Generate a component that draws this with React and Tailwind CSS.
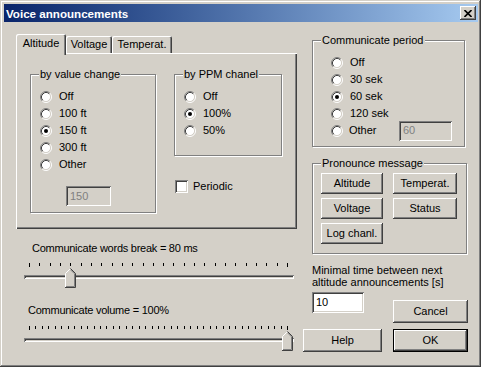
import React from "react";

// classic win2k bevels
const raised =
  "shadow-[inset_-1px_-1px_#404040,inset_1px_1px_#ffffff,inset_-2px_-2px_#808080,inset_2px_2px_#d4d0c8]";
const sunken =
  "shadow-[inset_1px_1px_#808080,inset_-1px_-1px_#ffffff,inset_2px_2px_#404040,inset_-2px_-2px_#d4d0c8]";
const etched = "border border-[#808080] shadow-[inset_1px_1px_#ffffff,1px_1px_#ffffff]";

function Radio({ checked }) {
  return (
    <svg width="12" height="12" viewBox="0 0 12 12" className="shrink-0">
      <circle cx="6" cy="6" r="4.5" fill="#ffffff" />
      <path d="M2.11 9.89 A5.5 5.5 0 0 1 9.89 2.11" stroke="#808080" fill="none" />
      <path d="M9.89 2.11 A5.5 5.5 0 0 1 2.11 9.89" stroke="#ffffff" fill="none" />
      <path d="M2.82 9.18 A4.5 4.5 0 0 1 9.18 2.82" stroke="#404040" fill="none" />
      <path d="M9.18 2.82 A4.5 4.5 0 0 1 2.82 9.18" stroke="#d4d0c8" fill="none" />
      {checked && <circle cx="6" cy="6" r="2" fill="#000000" />}
    </svg>
  );
}

function RadioRow({ label, checked, children }) {
  return (
    <div className="flex items-center h-[17px]">
      <Radio checked={checked} />
      <span className="ml-[7px]">{label}</span>
      {children}
    </div>
  );
}

function Group({ title, className, children }) {
  return (
    <fieldset className={etched + " m-0 p-0 min-w-0 " + className}>
      <legend className="ml-[8px] px-[1px] leading-[13px] bg-[#d4d0c8]">{title}</legend>
      {children}
    </fieldset>
  );
}

function Button({ children, className, def }) {
  if (def) {
    return (
      <div className={"border border-black " + className}>
        <div className={"w-full h-full flex items-center justify-center " + raised}>{children}</div>
      </div>
    );
  }
  return (
    <div className={"flex items-center justify-center " + raised + " " + className}>{children}</div>
  );
}

function Ticks({ count, width }) {
  const step = (width - 1) / count;
  const lines = [];
  for (let i = 0; i <= count; i++) {
    const x = Math.round(i * step) + 0.5;
    const end = i === 0 || i === count;
    lines.push(<line key={i} x1={x} x2={x} y1={0} y2={end ? 4 : 3} stroke="#000000" />);
  }
  return (
    <svg width={width} height="4" className="absolute left-[5px] top-[2px]">
      {lines}
    </svg>
  );
}

function Thumb({ left }) {
  return (
    <svg width="11" height="20" viewBox="0 0 11 20" className="absolute top-[7px]" style={{ left }}>
      <polygon points="0.5,19.5 0.5,5.5 5.5,0.5 10.5,5.5 10.5,19.5" fill="#d4d0c8" />
      <polyline points="0.5,19 0.5,5.5 5,1" stroke="#ffffff" fill="none" />
      <polyline points="5.5,0.5 10.5,5.5 10.5,19.5 0,19.5" stroke="#404040" fill="none" />
      <polyline points="5.5,1.8 9.5,5.8 9.5,18.5 1,18.5" stroke="#808080" fill="none" />
    </svg>
  );
}

function Slider({ ticks, thumb }) {
  return (
    <div className="relative h-[28px] w-[270px] ml-[8px]">
      <Ticks count={ticks} width={259} />
      <div className={"absolute left-0 top-[14px] h-[4px] w-[270px] " + sunken} />
      <Thumb left={thumb} />
    </div>
  );
}

export default function App() {
  return (
    <div className="w-[481px] h-[367px] bg-[#d4d0c8] pt-[4px] pl-[4px] pr-[3px] text-[11px] text-black font-['Liberation_Sans',Arial,sans-serif] shadow-[inset_-1px_-1px_#404040,inset_1px_1px_#d4d0c8,inset_-2px_-2px_#808080,inset_2px_2px_#ffffff]">
      {/* title bar */}
      <div className="h-[18px] flex items-center justify-between pl-[2px] pr-[2px] bg-linear-to-r from-[#0a246a] to-[#a6caf0]">
        <span className="text-white font-bold text-[11.6px] leading-[13px]">Voice announcements</span>
        <div className={"w-[16px] h-[14px] flex items-center justify-center bg-[#d4d0c8] " + raised}>
          <svg width="8" height="7" viewBox="0 0 8 7">
            <path d="M0.5 0 L7.5 7 M7.5 0 L0.5 7" stroke="#000000" strokeWidth="1.6" />
          </svg>
        </div>
      </div>

      <div className="flex">
        {/* left column */}
        <div className="w-[281px] ml-[12px] pt-[12px] flex flex-col">
          <div className="h-[19px] flex items-end">
            <div className="relative z-10 w-[50px] h-[21px] -mb-[2px] pt-[3px] flex justify-center bg-[#d4d0c8] rounded-t-[2px] shadow-[inset_1px_1px_#ffffff,inset_-1px_0_#404040,inset_-2px_0_#808080]">
              <span className="leading-[13px]">Altitude</span>
            </div>
            <div className="w-[46px] h-[17px] flex items-center justify-center rounded-t-[2px] shadow-[inset_1px_1px_#ffffff,inset_-1px_0_#404040,inset_-2px_0_#808080]">
              Voltage
            </div>
            <div className="w-[60px] h-[17px] flex items-center justify-center rounded-t-[2px] shadow-[inset_1px_1px_#ffffff,inset_-1px_0_#404040,inset_-2px_0_#808080]">
              Temperat.
            </div>
          </div>
          <div className="h-[176px] pt-[15px] pl-[14px] flex items-start gap-[18px] shadow-[inset_1px_1px_#ffffff,inset_-1px_-1px_#404040,inset_-2px_-2px_#808080]">
            <Group title="by value change" className="w-[126px] h-[145px]">
              <div className="pt-[7px] pl-[9px]">
                <RadioRow label="Off" />
                <RadioRow label="100 ft" />
                <RadioRow label="150 ft" checked />
                <RadioRow label="300 ft" />
                <RadioRow label="Other" />
                <div className={"mt-[13px] ml-[26px] w-[45px] h-[20px] pl-[4px] flex items-center text-[#808080] " + sunken}>
                  150
                </div>
              </div>
            </Group>
            <div className="flex flex-col">
              <Group title="by PPM chanel" className="w-[108px] h-[88px]">
                <div className="pt-[7px] pl-[9px]">
                  <RadioRow label="Off" />
                  <RadioRow label="100%" checked />
                  <RadioRow label="50%" />
                </div>
              </Group>
              <div className="mt-[22px] ml-[1px] flex items-center">
                <div className={"w-[13px] h-[13px] bg-white " + sunken} />
                <span className="ml-[5px]">Periodic</span>
              </div>
            </div>
          </div>
          <div className="mt-[13px] pl-[16px] leading-[13px] tracking-[-0.25px]">Communicate words break = 80 ms</div>
          <div className="mt-[6px]">
            <Slider ticks={25} thumb={41} />
          </div>
          <div className="mt-[15px] pl-[12px] leading-[13px] tracking-[-0.25px]">Communicate volume = 100%</div>
          <div className="mt-[7px]">
            <Slider ticks={40} thumb={258} />
          </div>
        </div>

        {/* right column */}
        <div className="w-[165px] ml-[6px] pt-[12px] flex flex-col">
          <Group title="Communicate period" className="ml-[9px] w-[153px] h-[113px]">
            <div className="pt-[7px] pl-[18px]">
              <RadioRow label="Off" />
              <RadioRow label="30 sek" />
              <RadioRow label="60 sek" checked />
              <RadioRow label="120 sek" />
              <div className="flex items-center h-[17px]">
                <Radio />
                <span className="ml-[6px] w-[50px]">Other</span>
                <div className={"w-[53px] h-[20px] pl-[4px] flex items-center text-[#808080] " + sunken}>60</div>
              </div>
            </div>
          </Group>
          <Group title="Pronounce message" className="ml-[9px] mt-[10px] w-[155px] h-[97px]">
            <div className="pt-[3px] pl-[8px] grid grid-cols-[62px_64px] gap-x-[10px] gap-y-[4px]">
              <Button className="h-[21px]">Altitude</Button>
              <Button className="h-[21px]">Temperat.</Button>
              <Button className="h-[21px]">Voltage</Button>
              <Button className="h-[21px]">Status</Button>
              <Button className="h-[21px]">Log chanl.</Button>
            </div>
          </Group>
          <div className="ml-[9px] mt-[10px] leading-[12px]">
            Minimal time between next
            <br />
            altitude announcements [s]
          </div>
          <div className="flex items-start">
            <div className={"ml-[9px] mt-[4px] w-[52px] h-[21px] pl-[4px] flex items-center bg-white " + sunken}>10</div>
            <Button className="ml-auto mt-[12px] w-[75px] h-[23px]">Cancel</Button>
          </div>
          <div className="mt-[6px] flex justify-between">
            <Button className="w-[79px] h-[23px]">Help</Button>
            <Button def className="w-[75px] h-[23px]">OK</Button>
          </div>
        </div>
      </div>
    </div>
  );
}
